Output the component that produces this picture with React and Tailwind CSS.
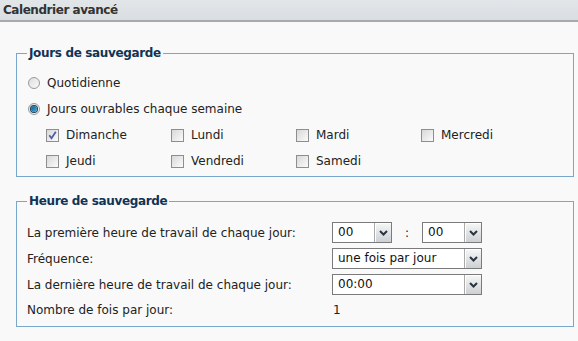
import React from 'react';

const font = { fontFamily: '"DejaVu Sans", Verdana, sans-serif' };

const Radio = ({ checked }) => (
  <span className="relative inline-block h-[12px] w-[12px] shrink-0 rounded-full border border-[#9a9a9a] bg-gradient-to-br from-[#dedede] to-[#fafafa]">
    {checked && (
      <span className="absolute left-[2px] top-[2px] h-[6px] w-[6px] rounded-full bg-gradient-to-br from-[#0d5c8c] to-[#46acd9] ring-1 ring-[#1c3f5a]" />
    )}
  </span>
);

const Checkbox = ({ checked }) => (
  <span className="relative inline-block h-[13px] w-[13px] shrink-0 border border-[#8e8e8e] bg-gradient-to-br from-[#d8d8d8] to-[#fbfbfb]">
    {checked && (
      <svg viewBox="0 0 11 11" className="absolute left-0 top-0 h-[11px] w-[11px]">
        <path d="M2.3 5.3 L4.5 8.2 L8.8 1.8" fill="none" stroke="#4a5ca6" strokeWidth="1.7" />
      </svg>
    )}
  </span>
);

const Select = ({ value, width }) => (
  <div className={`flex h-[21px] ${width} items-stretch border border-[#7b7b7b] bg-white`}>
    <span className="flex-1 pl-[5px] text-[12px] leading-[19px] text-[#111]">{value}</span>
    <span className="flex w-[17px] items-center justify-center border-l border-[#a9a9a9] bg-gradient-to-b from-[#f7f7f7] to-[#cdd1d4] shadow-[inset_1px_1px_0_#ffffff]">
      <svg viewBox="0 0 9 6" className="h-[6px] w-[9px]">
        <path d="M1 1 L4.5 4.5 L8 1" fill="none" stroke="#2b3440" strokeWidth="2" />
      </svg>
    </span>
  </div>
);

const Fieldset = ({ legend, children, className }) => (
  <fieldset className={`ml-[16px] w-[558px] min-w-0 rounded-none border border-[#79a6cb] px-[10px] ${className}`}>
    <legend className="px-[2px] text-[12px] font-bold tracking-[-0.35px] text-[#113355]">{legend}</legend>
    {children}
  </fieldset>
);

const Day = ({ label, checked }) => (
  <label className="flex items-center gap-[7px]">
    <Checkbox checked={checked} />
    <span>{label}</span>
  </label>
);

export default function App() {
  return (
    <div className="h-[341px] w-[578px] overflow-hidden bg-[#f9f9f9] text-[12px] text-[#222]" style={font}>
      <div className="h-[22px] border-b-2 border-[#a9a9a9] bg-gradient-to-b from-[#e2e6e9] to-[#d9dee2] pl-[3px] text-[12px] font-bold leading-[20px] tracking-[-0.45px] text-[#333]">
        Calendrier avancé
      </div>

      <Fieldset legend="Jours de sauvegarde" className="mt-[22px] h-[133px]">
        <div className="flex flex-col gap-[8px] pt-[12px]">
          <label className="flex items-center gap-[7px] pl-[1px]">
            <Radio />
            <span>Quotidienne</span>
          </label>
          <label className="flex items-center gap-[7px] pl-[1px]">
            <Radio checked />
            <span>Jours ouvrables chaque semaine</span>
          </label>
          <div className="grid grid-cols-[125px_125px_125px_125px] gap-y-[8px] pl-[19px]">
            <Day label="Dimanche" checked />
            <Day label="Lundi" />
            <Day label="Mardi" />
            <Day label="Mercredi" />
            <Day label="Jeudi" />
            <Day label="Vendredi" />
            <Day label="Samedi" />
          </div>
        </div>
      </Fieldset>

      <Fieldset legend="Heure de sauvegarde" className="mt-[15px] h-[135px]">
        <div className="grid grid-cols-[305px_1fr] items-center gap-y-[5px] pt-[12px]">
          <span>La première heure de travail de chaque jour:</span>
          <div className="flex items-center">
            <Select value="00" width="w-[60px]" />
            <span className="w-[30px] text-center">:</span>
            <Select value="00" width="w-[60px]" />
          </div>
          <span>Fréquence:</span>
          <Select value="une fois par jour" width="w-[150px]" />
          <span>La dernière heure de travail de chaque jour:</span>
          <Select value="00:00" width="w-[150px]" />
          <span className="leading-[21px]">Nombre de fois par jour:</span>
          <span className="pl-[1px] leading-[21px]">1</span>
        </div>
      </Fieldset>
    </div>
  );
}
